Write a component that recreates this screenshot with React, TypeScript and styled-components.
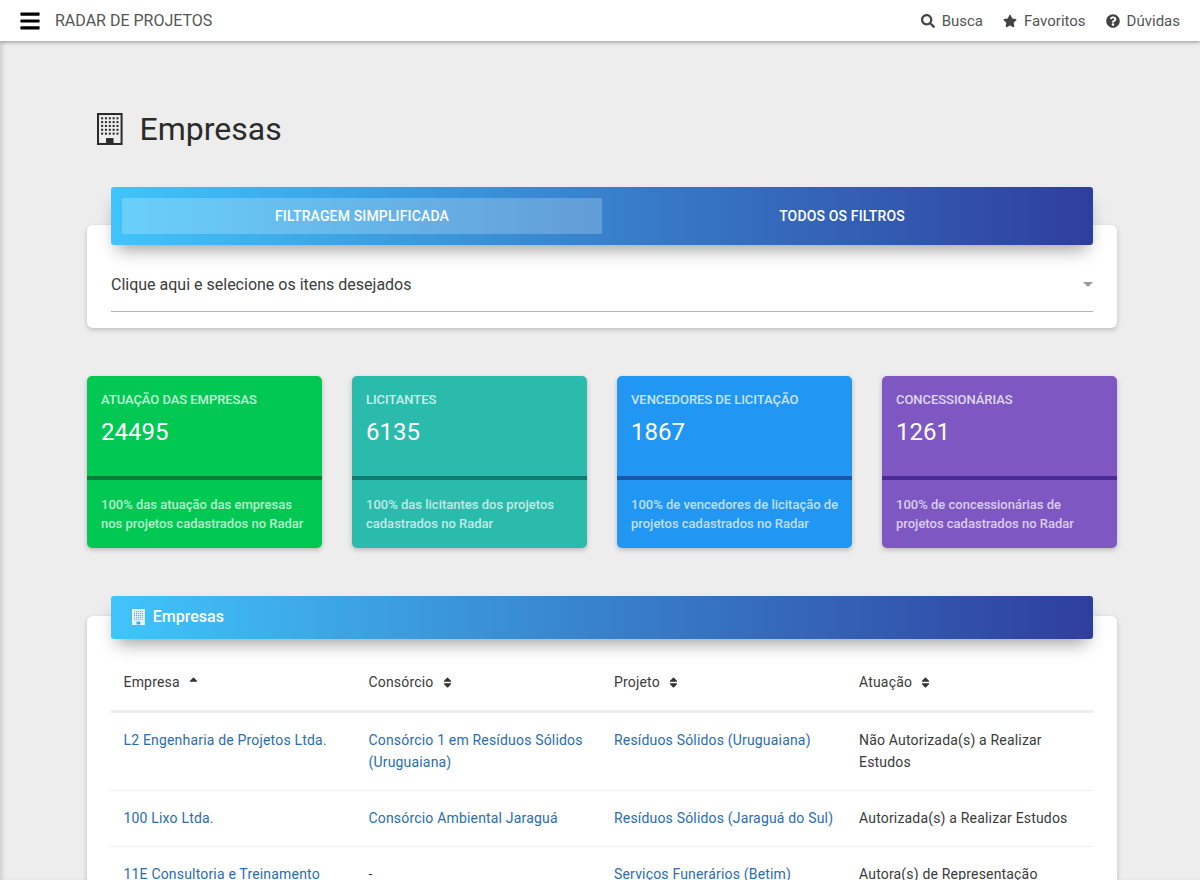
import React from 'react';
import styled, { createGlobalStyle } from 'styled-components';
import { FaBars, FaSearch, FaStar, FaQuestionCircle, FaSortUp, FaSort } from 'react-icons/fa';

const GlobalStyle = createGlobalStyle`
  html, body {
    margin: 0;
    padding: 0;
    background: #ededed;
    font-family: Roboto, "Liberation Sans", sans-serif;
  }
  * { box-sizing: border-box; }
`;

const Page = styled.div`
  height: 880px;
  overflow: hidden;
  background: #ededed;
  box-shadow: inset 4px 0 5px -2px rgba(0,0,0,0.14);
`;

const TopBar = styled.header`
  height: 41px;
  background: #fff;
  box-shadow: 0 1px 4px rgba(0,0,0,0.4);
  display: flex;
  align-items: center;
  padding: 0 20px;
  color: #555;
  font-size: 16px;
`;

const MenuIcon = styled(FaBars)`
  margin-left: -1px;
  color: #000;
  font-size: 22px;
`;

const Brand = styled.div`
  margin-left: 14px;
  flex: 1;
`;

const TopLink = styled.a`
  display: flex;
  align-items: center;
  gap: 7px;
  margin-left: 20px;
  color: #555;
  font-size: 15px;
  svg { color: #444; font-size: 14px; }
`;

const Main = styled.main`
  padding: 66px 83px 0 87px;
`;

const PageTitle = styled.h1`
  display: flex;
  align-items: center;
  gap: 17px;
  margin: 0 0 74px;
  height: 44px;
  font-size: 32px;
  font-weight: 400;
  color: #2b2b2b;
`;

const TitleIcon = styled.span`
  display: flex;
  margin-left: 10px;
  color: #2b2b2b;
`;

const Card = styled.section`
  display: flow-root;
  background: #fff;
  border-radius: 6px;
  box-shadow: 0 2px 5px rgba(0,0,0,0.2);
  padding: 0 24px;
`;

const GradientBar = styled.div<{ $height: number; $lift: number }>`
  height: ${p => p.$height}px;
  margin-top: -${p => p.$lift}px;
  border-radius: 3px;
  background: linear-gradient(90deg, #40c4fb 0%, #2f3e9e 100%);
  box-shadow: 0 10px 18px -6px rgba(0,0,0,0.4);
`;

const Tabs = styled(GradientBar)`
  display: flex;
  padding: 11px;
`;

const Tab = styled.div<{ $active?: boolean }>`
  flex: 1;
  display: flex;
  align-items: center;
  justify-content: center;
  color: #fff;
  font-size: 14px;
  font-weight: 500;
  letter-spacing: 0.15px;
  border-radius: 2px;
  background: ${p => (p.$active ? 'rgba(255,255,255,0.22)' : 'transparent')};
`;

const SelectField = styled.div`
  display: flex;
  align-items: center;
  justify-content: space-between;
  height: 67px;
  padding-top: 12px;
  margin-bottom: 16px;
  border-bottom: 1px solid #b5b5b5;
  font-size: 16px;
  color: #3c3c3c;
`;

const Caret = styled.span`
  width: 0;
  height: 0;
  border-left: 5px solid transparent;
  border-right: 5px solid transparent;
  border-top: 5px solid #999;
`;

const Stats = styled.div`
  display: grid;
  grid-template-columns: repeat(4, 235px);
  justify-content: space-between;
  margin: 48px 0 68px;
`;

const StatCard = styled.div<{ $bg: string }>`
  height: 172px;
  background: ${p => p.$bg};
  border-radius: 5px;
  box-shadow: 0 2px 5px rgba(0,0,0,0.22);
  color: #fff;
  display: flex;
  flex-direction: column;
`;

const StatTop = styled.div<{ $line: string }>`
  height: 104px;
  padding: 16px 14px 0;
  border-bottom: 4px solid ${p => p.$line};
`;

const StatLabel = styled.div`
  font-size: 13px;
  font-weight: 500;
  line-height: 16px;
  letter-spacing: -0.05px;
  opacity: 0.75;
`;

const StatValue = styled.div`
  font-size: 24px;
  line-height: 30px;
  margin-top: 9px;
`;

const StatText = styled.div`
  padding: 15px 10px 0 14px;
  font-size: 13px;
  font-weight: 500;
  line-height: 19px;
  opacity: 0.7;
`;

const TableHead = styled(GradientBar)`
  display: flex;
  align-items: center;
  gap: 8px;
  padding: 0 0 2px 21px;
  color: #fff;
  font-size: 16px;
  font-weight: 500;
`;

const HeadIcon = styled.span`
  display: flex;
  color: rgba(255,255,255,0.85);
`;

const Table = styled.table`
  width: 100%;
  border-collapse: collapse;
  table-layout: fixed;
  margin-top: 15px;
  font-size: 14px;
  letter-spacing: 0.18px;
  color: #3a3a3a;
`;

const ColA = styled.col`
  width: 245px;
`;

const ColB = styled.col`
  width: 245.5px;
`;

const Th = styled.th`
  height: 57px;
  padding: 1px 12.5px 0;
  text-align: left;
  font-weight: 400;
  border-bottom: 3px solid #eee;
`;

const ThInner = styled.span`
  display: inline-flex;
  align-items: center;
  gap: 7px;
  svg { font-size: 13px; color: #333; }
`;

const Td = styled.td`
  padding: 16px 12.5px 17px;
  line-height: 22px;
  vertical-align: top;
  border-bottom: 1px solid #eee;
`;

const CellLink = styled.a`
  color: #2a6db0;
`;

const BuildingIcon = ({ size, cut }: { size: number; cut?: string }) => {
  const dots: React.ReactElement[] = [];
  for (let r = 0; r < 5; r++) {
    for (let c = 0; c < 5; c++) {
      dots.push(<rect key={`${r}-${c}`} x={3.85 + c * 3.6} y={4 + r * 3.6} width="1.9" height="1.9" fill={cut || 'currentColor'} />);
    }
  }
  return (
    <svg width={size * 0.8} height={size} viewBox="0 0 24 30">
      <rect x="0.95" y="0.95" width="22.1" height="28.1" fill={cut ? 'currentColor' : 'none'} stroke="currentColor" strokeWidth="1.9" />
      {dots}
      <rect x="8.5" y="23.5" width="7" height="5.5" fill={cut || 'currentColor'} />
    </svg>
  );
};

const stats = [
  { label: 'ATUAÇÃO DAS EMPRESAS', value: '24495', text: '100% das atuação das empresas nos projetos cadastrados no Radar', bg: '#00c853', line: '#0a7d3b' },
  { label: 'LICITANTES', value: '6135', text: '100% das licitantes dos projetos cadastrados no Radar', bg: '#2bbbad', line: '#0f7b6e' },
  { label: 'VENCEDORES DE LICITAÇÃO', value: '1867', text: '100% de vencedores de licitação de projetos cadastrados no Radar', bg: '#2196f3', line: '#1559a8' },
  { label: 'CONCESSIONÁRIAS', value: '1261', text: '100% de concessionárias de projetos cadastrados no Radar', bg: '#7e57c2', line: '#4a2a96' },
];

const rows = [
  ['L2 Engenharia de Projetos Ltda.', 'Consórcio 1 em Resíduos Sólidos (Uruguaiana)', 'Resíduos Sólidos (Uruguaiana)', 'Não Autorizada(s) a Realizar Estudos'],
  ['100 Lixo Ltda.', 'Consórcio Ambiental Jaraguá', 'Resíduos Sólidos (Jaraguá do Sul)', 'Autorizada(s) a Realizar Estudos'],
  ['11E Consultoria e Treinamento', '-', 'Serviços Funerários (Betim)', 'Autora(s) de Representação'],
];

const App: React.FC = () => (
  <Page>
    <GlobalStyle />
    <TopBar>
      <MenuIcon />
      <Brand>RADAR DE PROJETOS</Brand>
      <TopLink><FaSearch />Busca</TopLink>
      <TopLink><FaStar />Favoritos</TopLink>
      <TopLink><FaQuestionCircle />Dúvidas</TopLink>
    </TopBar>
    <Main>
      <PageTitle>
        <TitleIcon><BuildingIcon size={32} /></TitleIcon>
        Empresas
      </PageTitle>
      <Card>
        <Tabs $height={58} $lift={38}>
          <Tab $active>FILTRAGEM SIMPLIFICADA</Tab>
          <Tab>TODOS OS FILTROS</Tab>
        </Tabs>
        <SelectField>
          Clique aqui e selecione os itens desejados
          <Caret />
        </SelectField>
      </Card>
      <Stats>
        {stats.map(s => (
          <StatCard key={s.label} $bg={s.bg}>
            <StatTop $line={s.line}>
              <StatLabel>{s.label}</StatLabel>
              <StatValue>{s.value}</StatValue>
            </StatTop>
            <StatText>{s.text}</StatText>
          </StatCard>
        ))}
      </Stats>
      <Card>
        <TableHead $height={43} $lift={20}>
          <HeadIcon><BuildingIcon size={16} cut="#40a8e8" /></HeadIcon>
          Empresas
        </TableHead>
        <Table>
          <colgroup>
            <ColA />
            <ColB />
            <ColA />
            <col />
          </colgroup>
          <thead>
            <tr>
              <Th><ThInner>Empresa <FaSortUp /></ThInner></Th>
              <Th><ThInner>Consórcio <FaSort /></ThInner></Th>
              <Th><ThInner>Projeto <FaSort /></ThInner></Th>
              <Th><ThInner>Atuação <FaSort /></ThInner></Th>
            </tr>
          </thead>
          <tbody>
            {rows.map(r => (
              <tr key={r[0]}>
                <Td><CellLink>{r[0]}</CellLink></Td>
                <Td>{r[1] === '-' ? '-' : <CellLink>{r[1]}</CellLink>}</Td>
                <Td><CellLink>{r[2]}</CellLink></Td>
                <Td>{r[3]}</Td>
              </tr>
            ))}
          </tbody>
        </Table>
      </Card>
    </Main>
  </Page>
);

export default App;
